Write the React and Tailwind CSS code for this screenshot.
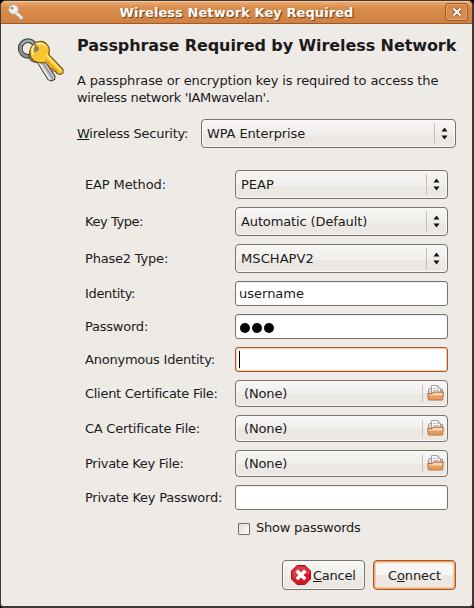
import React from "react";

const control =
  "flex items-center rounded-[4px] border border-[#77726b] bg-linear-to-b from-[#f8f6f4] from-0% via-[#f1efec] via-50% to-[#f1efec] shadow-[inset_0_0_0_1px_#faf8f6,inset_0_-12px_0_#ebe8e4]";

function Arrows() {
  return (
    <svg className="h-[13px] w-[7px]" viewBox="0 0 7 13">
      <path d="M3.5 0.5 6.5 4.5H0.5zM3.5 12.5 6.5 8.5H0.5z" fill="#111" />
    </svg>
  );
}

function Select({ value, className, tracking = "" }) {
  return (
    <div className={`${control} h-[29px] justify-between pl-[5px] ${className}`}>
      <span className={tracking}>{value}</span>
      <div className="flex h-[21px] w-[21px] items-center border-l border-[#c5c0b9] pl-[6px]">
        <Arrows />
      </div>
    </div>
  );
}

function FolderIcon() {
  return (
    <svg className="h-4 w-[17px]" viewBox="0 0 17 16">
      <path d="M1.500 12V4.500l1-1h3l1 1h9V12z" fill="#dedbd6" stroke="#98938c" />
      <path d="M4.500 9.500V.5h6l3 3v6z" fill="#fbfbfa" stroke="#8f9bab" strokeWidth=".9" />
      <path d="M10.500.5v3h3M6 3.500h3M6 5.500h6" fill="none" stroke="#aab4c2" strokeWidth=".9" />
      <path d="M.6 8.500h4.400l1.300-1.500h10.100l-.8 8H1.500z" fill="#ea9b5c" stroke="#b87040" />
      <path d="M1.400 9.500h4L6.800 8h8.700l-.2 2.500H1.600z" fill="#fad9bb" />
    </svg>
  );
}

function FileButton() {
  return (
    <div className={`${control} h-[27px] justify-between pl-2 pr-[3px]`}>
      <span className="tracking-[-0.150px]">(None)</span>
      <div className="flex h-[17px] items-center border-l border-[#c5c0b9] pb-[1px] pl-[4px]">
        <FolderIcon />
      </div>
    </div>
  );
}

function Entry({ children, focused }) {
  return (
    <div
      className={`flex h-[25px] items-center rounded-[3px] border bg-white pl-[3px] ${
        focused ? "border-[#a9572a] shadow-[inset_0_0_0_1px_#f9cfae]" : "border-[#77726b] shadow-[inset_0_1px_0_#eeeeec]"
      }`}
    >
      {children}
    </div>
  );
}

function Row({ label, tracking, children }) {
  return (
    <div className="grid grid-cols-[150px_213px] items-center">
      <span className={tracking}>{label}</span>
      {children}
    </div>
  );
}

function KeysIcon() {
  return (
    <svg className="h-12 w-12" viewBox="0 0 48 48">
      <g strokeLinejoin="round" strokeLinecap="round">
        <circle cx="11" cy="11.500" r="7.800" fill="none" stroke="#3e4040" strokeWidth="4.800" />
        <circle cx="11" cy="11.500" r="7.800" fill="none" stroke="#8d9090" strokeWidth="2.800" />
        <path d="M5 7.500c2-3.500 7-5 10.500-2.500" fill="none" stroke="#b9bbbb" strokeWidth="1.200" />
        <path d="M14.500 13c-2.500 2.500-3 6-1.500 9 1.500 2.500 4 3.600 7.500 3.500L31 42.500l3.500 1.500 3.300-1.800.1-3.200L29 25l-5-9z" fill="#c2c4c4" stroke="#3b3d41" strokeWidth="1.100" />
        <path d="M14.800 18c0 4 2.500 6 6.200 6.200L32.500 42" fill="none" stroke="#eeeeec" strokeWidth="1.500" />
        <path d="M26 26l9.500 15" stroke="#85878a" strokeWidth="1.200" />
        <path d="M16 7.500c3.500-4 10.500-4.200 14 0 2.600 3 2.800 6.500 1.600 9.800L46 32.500v3.500l-3 1.500-3.400-1.300-1-2-2-.3-1-2-2-.4-5.100-6.200c-6.500 1.500-12.500-.3-14.700-5.300-1.600-4-.8-9 2.200-12.500z" fill="#f8c630" stroke="#70500f" strokeWidth="1.100" />
        <path d="M16 17.500c-1.500-3.500-.8-7 2-9.500 3-2.400 7.500-2.200 10 .5" fill="none" stroke="#ffec9a" strokeWidth="1.600" />
        <path d="M29.500 18L44 33.500" stroke="#ffe26a" strokeWidth="1.900" />
        <path d="M29 23l12 12" stroke="#d29513" strokeWidth="1.100" />
        <circle cx="19.500" cy="11.800" r="2.500" fill="#a08446" />
        <path d="M17.500 7c2 2 2 5 .8 7.500" fill="none" stroke="#7d7f80" strokeWidth="2" />
      </g>
    </svg>
  );
}

function TitleKey() {
  return (
    <svg className="h-4 w-4" viewBox="0 0 16 16">
      <path d="M8 6.500l7 6.500v1.500l-2 1-2-1.500-.5-1.500-1.500-.5L6 9" fill="#eeeeec" stroke="#b0a79e" strokeWidth=".7" />
      <circle cx="5.500" cy="5.500" r="4.700" fill="#eeeeec" stroke="#b7aea5" strokeWidth=".7" />
      <circle cx="4" cy="4.200" r="1.400" fill="#a68e79" />
    </svg>
  );
}

function CancelIcon() {
  return (
    <svg className="h-5 w-5 shrink-0" viewBox="0 0 20 20">
      <path d="M6 .5h8L19.500 6v8L14 19.500H6L.5 14V6z" fill="#cf1724" stroke="#b80e1b" />
      <path d="M6.500 1.500h7l5 5V9C13 9 7 10 1.500 13V6.500z" fill="#dd3b44" />
      <path d="M5.700 5.700l8.600 8.600M14.300 5.700l-8.600 8.600" stroke="#fff" strokeWidth="3.600" />
    </svg>
  );
}

export default function App() {
  return (
    <div className="h-[608px] w-[474px] bg-black">
      <div className="flex h-[608px] w-[474px] flex-col overflow-hidden rounded-t-[6px] rounded-b-[4px] border border-r-2 border-b-2 border-[#403a35] bg-[#eeebe7] font-['DejaVu_Sans',sans-serif] text-[13px] leading-[17px] text-[#1a1a1a]">
        <header className="flex h-[23px] shrink-0 items-center border-b border-[#9b5a2b] bg-linear-to-b from-[#efb079] from-0% via-[#d98e4d] via-30% to-[#cf8142] pl-[7px] pr-[4px] shadow-[inset_0_1px_0_#f5c396]">
          <TitleKey />
          <h1 className="flex-1 pl-[4px] text-center text-[13px] font-bold tracking-[0.070px] whitespace-nowrap text-white [text-shadow:1px_1px_1px_#6b3a17]">
            Wireless Network Key Required
          </h1>
          <div className="flex h-[18px] w-[23px] items-center justify-center rounded-[3px] border border-[#9c5728] bg-[#d68c4e] shadow-[inset_0_0_0_1px_#e5a26c]">
            <svg className="h-[10px] w-[10px]" viewBox="0 0 10 10">
              <path d="M1.500 1.500l7 7M8.500 1.500l-7 7" stroke="#70401d" strokeWidth="3.600" />
              <path d="M1.500 1.500l7 7M8.500 1.500l-7 7" stroke="#fff" strokeWidth="2.200" />
            </svg>
          </div>
        </header>
        <main className="flex flex-1 pl-[16px] pt-[12px]">
          <div className="w-[60px] shrink-0 pt-px">
            <KeysIcon />
          </div>
          <div className="w-[379px] shrink-0">
            <h2 className="text-[16px] leading-[20px] font-bold tracking-[-0.080px] whitespace-nowrap">
              Passphrase Required by Wireless Network
            </h2>
            <p className="mt-[16px] whitespace-nowrap">
              <span className="tracking-[-0.140px]">A passphrase or encryption key is required to access the</span>
              <br />
              <span className="tracking-[-0.340px]">wireless network 'IAMwavelan'.</span>
            </p>
            <div className="mt-[13px] flex items-center justify-between">
              <span className="tracking-[-0.230px]">
                <u>W</u>ireless Security:
              </span>
              <Select value="WPA Enterprise" className="w-[255px]" tracking="tracking-[-0.120px]" />
            </div>
            <div className="mt-[22px] flex flex-col gap-2 pl-2 whitespace-nowrap">
              <Row label="EAP Method:" tracking="tracking-[-0.120px]"><Select value="PEAP" className="w-full" /></Row>
              <Row label="Key Type:" tracking="tracking-[-0.440px]"><Select value="Automatic (Default)" className="w-full" tracking="tracking-[-0.120px]" /></Row>
              <Row label="Phase2 Type:" tracking="tracking-[-0.200px]"><Select value="MSCHAPV2" className="w-full" tracking="tracking-[0.080px]" /></Row>
              <Row label="Identity:" tracking="tracking-[-0.350px]"><Entry>username</Entry></Row>
              <Row label="Password:" tracking="tracking-[-0.230px]">
                <Entry>
                  <span className="flex gap-[2px] pl-[1px] pt-[2px]">
                    <i className="size-[10px] rounded-full bg-black" />
                    <i className="size-[10px] rounded-full bg-black" />
                    <i className="size-[10px] rounded-full bg-black" />
                  </span>
                </Entry>
              </Row>
              <Row label="Anonymous Identity:" tracking="tracking-[-0.220px]">
                <Entry focused><i className="h-[17px] w-px bg-black" /></Entry>
              </Row>
              <Row label="Client Certificate File:" tracking="tracking-[-0.290px]"><FileButton /></Row>
              <Row label="CA Certificate File:" tracking="tracking-[-0.250px]"><FileButton /></Row>
              <Row label="Private Key File:" tracking="tracking-[-0.280px]"><FileButton /></Row>
              <Row label="Private Key Password:" tracking="tracking-[-0.250px]"><Entry /></Row>
            </div>
            <div className="mt-[9px] flex h-[17px] items-center gap-[6px] pl-[161px]">
              <i className="mt-[2px] size-3 rounded-[1px] border border-[#77726b] bg-linear-to-br from-[#dedbd7] to-white" />
              <span className="tracking-[-0.220px]">Show passwords</span>
            </div>
            <div className="mt-[24px] flex justify-end gap-2">
              <div className={`${control} h-[30px] w-[83px] pl-2`}>
                <CancelIcon />
                <span className="pl-[2px] tracking-[-0.250px]"><u>C</u>ancel</span>
              </div>
              <div className="flex h-[30px] w-[83px] items-center justify-center rounded-[4px] border border-[#a9572a] bg-linear-to-b from-[#f8f6f4] from-50% to-[#ebe8e4] to-50% shadow-[inset_0_0_0_1px_#f0a468,inset_0_0_0_2px_#f8c9a2]">
                <span className="tracking-[-0.120px]">C<u>o</u>nnect</span>
              </div>
            </div>
          </div>
        </main>
      </div>
    </div>
  );
}
